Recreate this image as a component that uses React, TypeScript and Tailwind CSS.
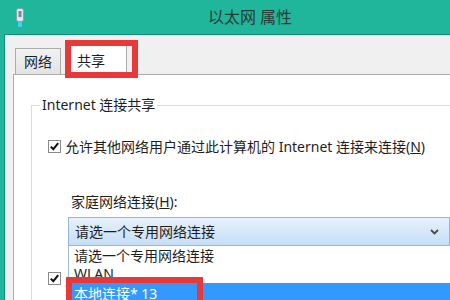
import React from 'react';

const CheckBox: React.FC = () => (
  <span className="w-[13px] h-[13px] shrink-0 border border-[#8a8a8a] bg-white flex items-center justify-center">
    <svg width="11" height="11" viewBox="0 0 11 11">
      <path d="M1.8 5.6 L4.3 8.2 L9.2 2.2" stroke="#111" strokeWidth="2" fill="none" />
    </svg>
  </span>
);

const App: React.FC = () => {
  return (
    <div className="w-[450px] h-[300px] overflow-hidden relative bg-[#1fb69b] text-[#1e1e1e] font-['Noto_Sans','Noto_Sans_CJK_SC',sans-serif]">
      {/* Title bar */}
      <div className="h-[34px] relative flex items-center justify-center">
        <svg className="absolute left-[16px] top-[8px]" width="8" height="19" viewBox="0 0 8 19">
          <rect x="0.5" y="0.5" width="7" height="13" rx="2" fill="#dfe7ee" stroke="#8aa0b0" />
          <rect x="2.5" y="3" width="3" height="6" fill="#7a8b97" />
          <rect x="2" y="14" width="4" height="5" fill="#39d2e8" />
        </svg>
        <span className="pl-[50px] text-[16px] text-[#2c3a37]">以太网 属性</span>
      </div>

      <div className="flex h-[266px]">
        <div className="w-[8px]" />
        <div className="flex-1 flex flex-col bg-[#f0f0f0] border-l border-t border-[#148f78]">
          {/* Tabs */}
          <div className="h-[39px] shrink-0 flex items-end gap-[7px] pl-[10px]">
            <div className="w-[46px] h-[26px] flex items-center justify-center border border-b-0 border-[#acacac] bg-gradient-to-b from-[#f2f2f2] to-[#e3e3e3] text-[14px]">
              网络
            </div>
            <div className="w-[59px] h-[31px] -mb-px relative z-10 flex items-center pl-[8px] border border-b-0 border-[#acacac] bg-white text-[14px]">
              共享
            </div>
          </div>

          {/* Tab panel */}
          <div className="ml-[8px] flex-1 bg-white border-l border-t border-[#acacac]">
            <div className="ml-[17px] mt-[30px] h-full relative border-l border-t border-[#dcdcdc]">
              <span className="absolute -top-[11px] left-[8px] bg-white px-[2px] text-[14px] leading-[20px]">
                Internet 连接共享
              </span>

              <div className="pt-[34px] pl-[16px] flex items-center gap-[4px] h-[47px]">
                <CheckBox />
                <span className="text-[14px] leading-[13px] whitespace-nowrap">
                  允许其他网络用户通过此计算机的 Internet 连接来连接(<u>N</u>)
                </span>
              </div>

              <div className="mt-[39px] pl-[39px] text-[14px] leading-[20px]">
                家庭网络连接(<u>H</u>):
              </div>

              <div className="mt-[5px] ml-[36px] w-[382px] relative">
                <div className="h-[29px] flex items-center justify-between pl-[6px] pr-[10px] border border-[#94b6d8] bg-gradient-to-b from-[#e6f1fc] to-[#c6def6] text-[14px]">
                  <span>请选一个专用网络连接</span>
                  <svg width="9" height="6" viewBox="0 0 9 6">
                    <path d="M1 1 L4.5 4.5 L8 1" stroke="#4a4a4a" strokeWidth="1.8" fill="none" />
                  </svg>
                </div>

                {/* Open dropdown list */}
                <div className="absolute top-full left-0 w-full z-20 bg-white border-l border-[#a7b9cc] text-[14px]">
                  <div className="h-[18px] leading-[18px] pl-[5px] mt-px">请选一个专用网络连接</div>
                  <div className="h-[18px] leading-[18px] pl-[5px]">WLAN</div>
                  <div className="h-[22px] leading-[22px] pl-[5px] bg-[#3399ff] text-white">本地连接* 13</div>
                </div>
              </div>

              <div className="mt-[26px] pl-[16px] flex items-center gap-[4px]">
                <CheckBox />
                <span className="text-[14px] leading-[13px] whitespace-nowrap">
                  允许其他网络用户控制或禁用共享的 Internet 连接(<u>O</u>)
                </span>
              </div>
            </div>
          </div>
        </div>
      </div>

      {/* Red annotation boxes */}
      <div className="absolute left-[65px] top-[40px] w-[73px] h-[38px] border-[6px] border-[#e8393a] z-30" />
      <div className="absolute left-[66px] top-[277px] w-[137px] h-[40px] border-[6px] border-[#e8393a] z-30" />
    </div>
  );
};

export default App;
